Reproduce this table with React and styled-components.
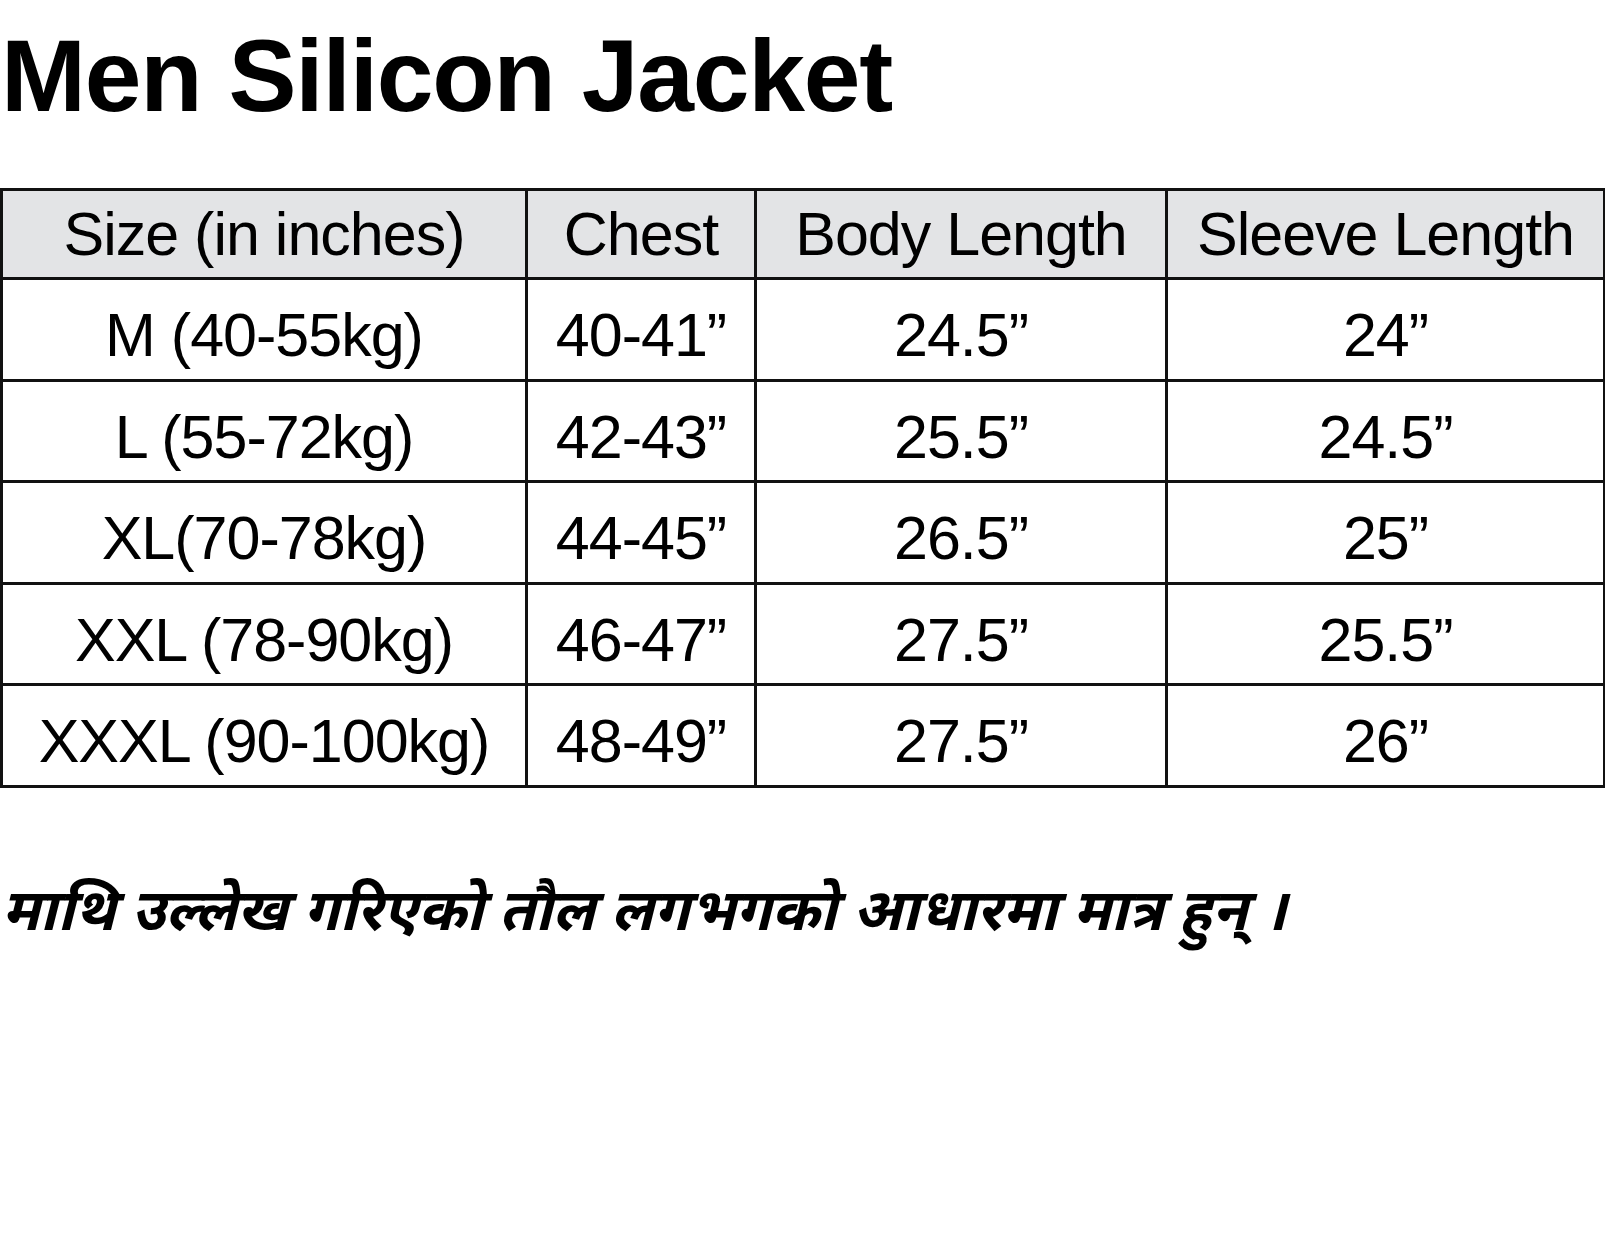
import React from "react";
import styled, { createGlobalStyle } from "styled-components";

const Global = createGlobalStyle`
  html, body {
    margin: 0;
    padding: 0;
    background: #fff;
  }
  body {
    font-family: "Liberation Sans", Arial, sans-serif;
    color: #000;
  }
`;

const Page = styled.div`
  width: 1605px;
  height: 1242px;
  background: #fff;
  overflow: hidden;
`;

const Title = styled.h1`
  margin: 0;
  padding: 24px 0 0 1px;
  font-family: "Liberation Sans Narrow", "Liberation Sans", Arial, sans-serif;
  font-weight: 700;
  font-size: 102px;
  line-height: 104px;
  letter-spacing: -1.2px;
  white-space: nowrap;
`;

const Table = styled.table`
  margin-top: 60px;
  width: 1603px;
  border-collapse: collapse;
  table-layout: fixed;
  border: 3px solid #111;
`;

const HeadCell = styled.th`
  height: 86px;
  padding: 0;
  background: #e3e4e6;
  border: 3px solid #111;
  font-weight: 400;
  font-size: 61px;
  text-align: center;
  white-space: nowrap;
  letter-spacing: -1px;
`;

const Cell = styled.td`
  height: 101.5px;
  box-sizing: border-box;
  padding: 12px 0 0;
  border: 3px solid #111;
  font-size: 61px;
  text-align: center;
  white-space: nowrap;
  letter-spacing: -1px;
`;

const Note = styled.p`
  margin: 90px 0 0 2px;
  font-family: "Noto Sans Devanagari", "Noto Sans", "DejaVu Sans", sans-serif;
  font-size: 58px;
  font-weight: 700;
  font-style: italic;
  letter-spacing: 0.3px;
  white-space: nowrap;
`;

const cols = [525, 229, 411, 438];
const head = ["Size (in inches)", "Chest", "Body Length", "Sleeve Length"];
const rows = [
  ["M (40-55kg)", "40-41”", "24.5”", "24”"],
  ["L (55-72kg)", "42-43”", "25.5”", "24.5”"],
  ["XL(70-78kg)", "44-45”", "26.5”", "25”"],
  ["XXL (78-90kg)", "46-47”", "27.5”", "25.5”"],
  ["XXXL (90-100kg)", "48-49”", "27.5”", "26”"],
];

export default function App() {
  return (
    <Page>
      <Global />
      <Title>Men Silicon Jacket</Title>
      <Table>
        <colgroup>
          {cols.map((w, i) => (
            <col key={i} style={{ width: w }} />
          ))}
        </colgroup>
        <thead>
          <tr>
            {head.map((h) => (
              <HeadCell key={h}>{h}</HeadCell>
            ))}
          </tr>
        </thead>
        <tbody>
          {rows.map((r, i) => (
            <tr key={i}>
              {r.map((c, j) => (
                <Cell key={j}>{c}</Cell>
              ))}
            </tr>
          ))}
        </tbody>
      </Table>
      <Note>माथि उल्लेख गरिएको तौल लगभगको आधारमा मात्र हुन् ।</Note>
    </Page>
  );
}
